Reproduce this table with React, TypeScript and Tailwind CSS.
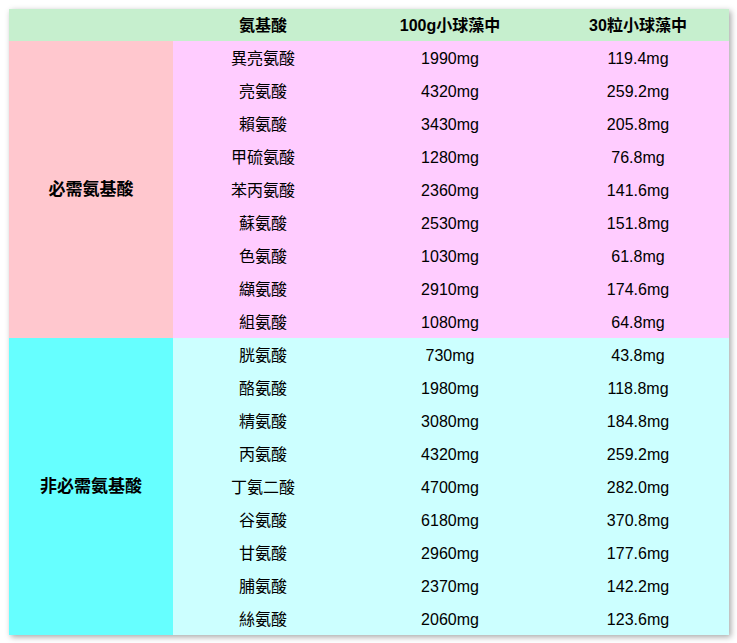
const essential = [
  ["異亮氨酸", "1990mg", "119.4mg"],
  ["亮氨酸", "4320mg", "259.2mg"],
  ["賴氨酸", "3430mg", "205.8mg"],
  ["甲硫氨酸", "1280mg", "76.8mg"],
  ["苯丙氨酸", "2360mg", "141.6mg"],
  ["蘇氨酸", "2530mg", "151.8mg"],
  ["色氨酸", "1030mg", "61.8mg"],
  ["纈氨酸", "2910mg", "174.6mg"],
  ["組氨酸", "1080mg", "64.8mg"],
];

const nonEssential = [
  ["胱氨酸", "730mg", "43.8mg"],
  ["酪氨酸", "1980mg", "118.8mg"],
  ["精氨酸", "3080mg", "184.8mg"],
  ["丙氨酸", "4320mg", "259.2mg"],
  ["丁氨二酸", "4700mg", "282.0mg"],
  ["谷氨酸", "6180mg", "370.8mg"],
  ["甘氨酸", "2960mg", "177.6mg"],
  ["脯氨酸", "2370mg", "142.2mg"],
  ["絲氨酸", "2060mg", "123.6mg"],
];

const font = { fontFamily: '"Liberation Sans", "Noto Sans CJK TC", sans-serif' };

const Section = ({
  label,
  rows,
  labelBg,
  rowBg,
}: {
  label: string;
  rows: string[][];
  labelBg: string;
  rowBg: string;
}) => (
  <>
    {rows.map((r, i) => (
      <tr key={r[0]} className={`h-[33px] ${rowBg}`}>
        {i === 0 && (
          <td rowSpan={rows.length} className={`${labelBg} text-center font-bold text-[17px]`}>
            {label}
          </td>
        )}
        <td className="text-center pt-[2px]">{r[0]}</td>
        <td className="text-center pt-[2px]">{r[1]}</td>
        <td className="text-center pt-[2px]">{r[2]}</td>
      </tr>
    ))}
  </>
);

export default function App() {
  return (
    <div className="w-[737px] h-[643px] bg-white p-[9px]" style={font}>
      <table className="table-fixed border-collapse w-[720px] text-[16px] leading-none text-black shadow-[2px_2px_6px_rgba(0,0,0,0.35)]">
        <colgroup>
          <col className="w-[164px]" />
          <col className="w-[180px]" />
          <col className="w-[194px]" />
          <col className="w-[182px]" />
        </colgroup>
        <thead>
          <tr className="h-[32px] bg-[#c6efce] font-bold">
            <th></th>
            <th className="text-center pt-[2px]">氨基酸</th>
            <th className="text-center pt-[2px]">100g小球藻中</th>
            <th className="text-center pt-[2px]">30粒小球藻中</th>
          </tr>
        </thead>
        <tbody>
          <Section label="必需氨基酸" rows={essential} labelBg="bg-[#ffc7ce]" rowBg="bg-[#ffccff]" />
          <Section label="非必需氨基酸" rows={nonEssential} labelBg="bg-[#66ffff]" rowBg="bg-[#ccffff]" />
        </tbody>
      </table>
    </div>
  );
}
